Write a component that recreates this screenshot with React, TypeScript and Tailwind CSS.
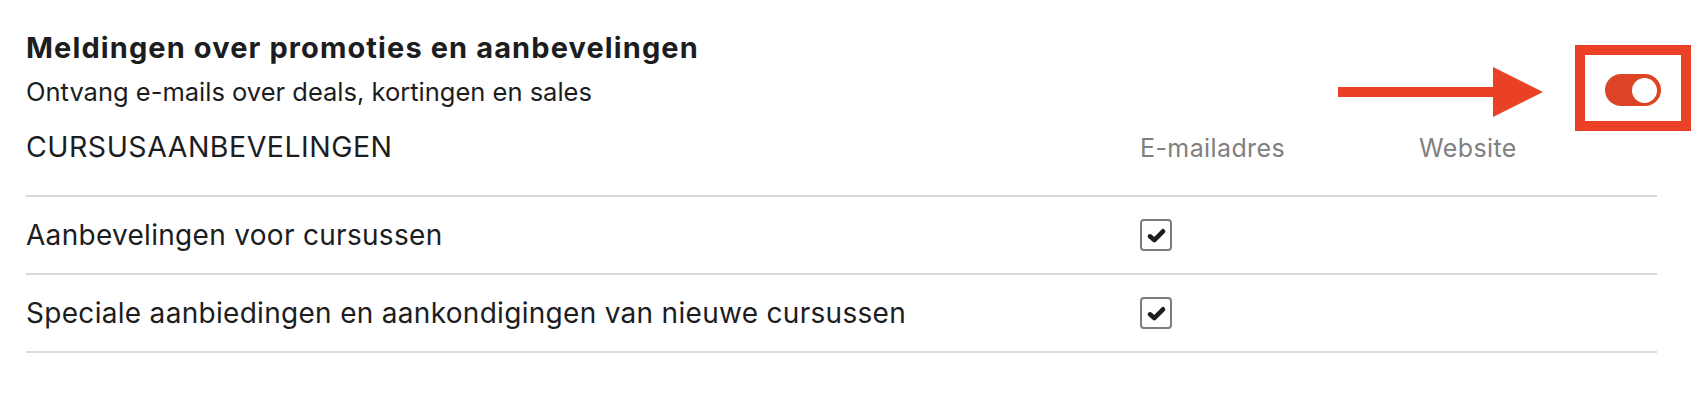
import React from "react";

const rows = [
  "Aanbevelingen voor cursussen",
  "Speciale aanbiedingen en aankondigingen van nieuwe cursussen",
];

function CheckBox() {
  return (
    <span className="flex h-[32px] w-[32px] items-center justify-center rounded-[4px] border-2 border-[#7d7d7d] bg-white">
      <svg viewBox="0 0 20 20" className="h-[21px] w-[21px]">
        <path
          d="M3.8 10.8 L7.9 14.4 L16.2 6"
          fill="none"
          stroke="#1c1d1f"
          strokeWidth="4.4"
          strokeLinecap="round"
          strokeLinejoin="round"
        />
      </svg>
    </span>
  );
}

export default function App() {
  return (
    <div className="min-h-[420px] w-full bg-white font-['Inter',sans-serif] text-[#1c1d1f]">
      <div className="w-[1657px] pl-[26px] pt-[30px]">
        {/* Header with toggle */}
        <div className="flex items-start justify-between">
          <div>
            <h2 className="text-[29px] font-bold leading-[36px] tracking-[1.1px]">
              Meldingen over promoties en aanbevelingen
            </h2>
            <p className="mt-[10px] text-[25.5px] leading-[32px]">
              Ontvang e-mails over deals, kortingen en sales
            </p>
          </div>

          <div className="relative mt-[44px] mr-[-4px]">
            <span className="flex h-[32px] w-[56px] items-center justify-end rounded-full bg-[#dd4425] pr-[4px]">
              <span className="h-[25px] w-[25px] rounded-full bg-white" />
            </span>
            {/* annotation: frame + arrow */}
            <span className="pointer-events-none absolute left-[-30px] top-[-29px] h-[86px] w-[116px] border-[10px] border-[#ea4025]" />
            <svg
              className="pointer-events-none absolute left-[-267px] top-[-7px]"
              width="205"
              height="50"
              viewBox="0 0 205 50"
            >
              <rect x="0" y="20" width="157" height="10" fill="#ea4025" />
              <polygon points="155,0 205,25 155,50" fill="#ea4025" />
            </svg>
          </div>
        </div>

        {/* Table */}
        <div className="mt-[21px] grid grid-cols-[1fr_279px_238px] items-baseline">
          <div className="pb-[29px] text-[28.5px] uppercase leading-[36px] tracking-[0.5px]">
            Cursusaanbevelingen
          </div>
          <div className="pb-[29px] text-[25px] leading-[36px] tracking-[0.4px] text-[#808080]">
            E-mailadres
          </div>
          <div className="pb-[29px] text-[25px] leading-[36px] tracking-[0.4px] text-[#808080]">
            Website
          </div>
        </div>

        {rows.map((label) => (
          <div
            key={label}
            className="grid h-[78px] grid-cols-[1fr_279px_238px] items-center border-t-2 border-[#d9d9d9]"
          >
            <div className="text-[28px] leading-[36px] tracking-[0.3px]">{label}</div>
            <div className="flex">
              <CheckBox />
            </div>
            <div />
          </div>
        ))}
        <div className="border-t-2 border-[#d9d9d9]" />
      </div>
    </div>
  );
}
